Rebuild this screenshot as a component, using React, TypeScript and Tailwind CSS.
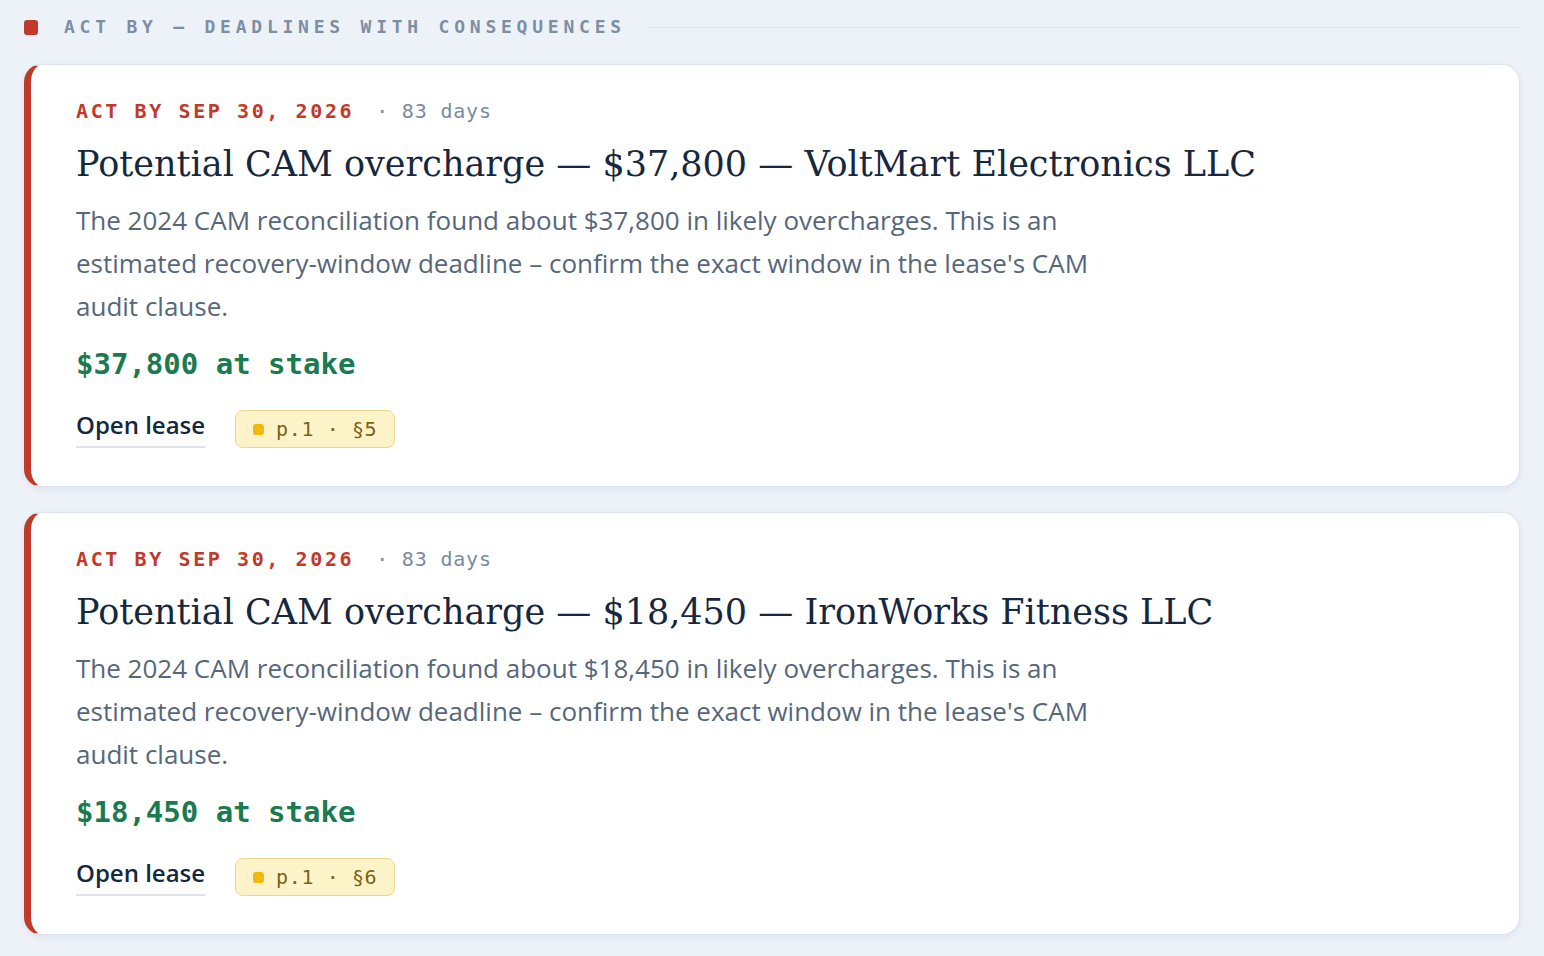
import React from "react";

type Deadline = {
  amount: string;
  tenant: string;
  section: string;
};

const items: Deadline[] = [
  { amount: "$37,800", tenant: "VoltMart Electronics LLC", section: "§5" },
  { amount: "$18,450", tenant: "IronWorks Fitness LLC", section: "§6" },
];

const mono = { fontFamily: '"DejaVu Sans Mono", "Liberation Mono", monospace' };
const serif = { fontFamily: '"DejaVu Serif", "Liberation Serif", serif' };
const sans = { fontFamily: '"Open Sans", Lato, sans-serif' };

function DeadlineCard({ d }: { d: Deadline }) {
  return (
    <div className="rounded-[18px] border border-[#dde3ec] border-l-[7px] border-l-[#c0392b] bg-white pl-[45px] pr-10 pt-[31px] pb-[38px] shadow-[0_2px_6px_rgba(30,50,80,0.08)]">
      <div className="flex items-baseline text-[20px] leading-[30px]" style={mono}>
        <span className="font-bold tracking-[0.13em] text-[#c0392b]">ACT BY SEP 30, 2026</span>
        <span className="ml-[22px] tracking-[0.04em] text-[#7b8ba0]">· 83 days</span>
      </div>
      <h2 className="mt-[15px] text-[35px] leading-[46px] text-[#16283d]" style={serif}>
        Potential CAM overcharge — {d.amount} — {d.tenant}
      </h2>
      <p className="mt-[12px] max-w-[1060px] text-[26px] leading-[43px] text-[#56677c]" style={sans}>
        {`The 2024 CAM reconciliation found about ${d.amount} in likely overcharges. This is an estimated recovery-window deadline – confirm the exact window in the lease's CAM audit clause.`}
      </p>
      <div className="mt-[16px] text-[29px] font-bold leading-[40px] text-[#1a7a50]" style={mono}>
        {d.amount} at stake
      </div>
      <div className="mt-[26px] flex items-center gap-[30px]">
        <span
          className="border-b-2 border-[#e0e4ea] pb-[6px] text-[24px] font-semibold leading-[30px] text-[#16283d]"
          style={sans}
        >
          Open lease
        </span>
        <span
          className="flex h-[38px] items-center gap-[12px] rounded-[8px] border border-[#ecd88a] bg-[#fdf3c8] pl-[17px] pr-[17px] text-[20px] tracking-[0.03em] text-[#7a6215]"
          style={mono}
        >
          <span className="h-[11px] w-[11px] rounded-[3px] bg-[#f0b90b]" />
          p.1 · {d.section}
        </span>
      </div>
    </div>
  );
}

export default function App() {
  return (
    <div className="min-h-[956px] bg-[#edf2f9] px-[24px] pt-[14px] pb-[20px]">
      <div className="flex items-center">
        <span className="h-[15px] w-[14px] rounded-[3px] bg-[#c0392b]" />
        <span
          className="ml-[26px] text-[18px] font-bold leading-[26px] tracking-[0.265em] text-[#7d8ea3]"
          style={mono}
        >
          ACT BY — DEADLINES WITH CONSEQUENCES
        </span>
        <span className="ml-[22px] h-px flex-1 bg-[#dfe6ef]" />
      </div>
      <div className="mt-[24px] flex flex-col gap-[25px]">
        {items.map((d) => (
          <DeadlineCard key={d.tenant} d={d} />
        ))}
      </div>
    </div>
  );
}
